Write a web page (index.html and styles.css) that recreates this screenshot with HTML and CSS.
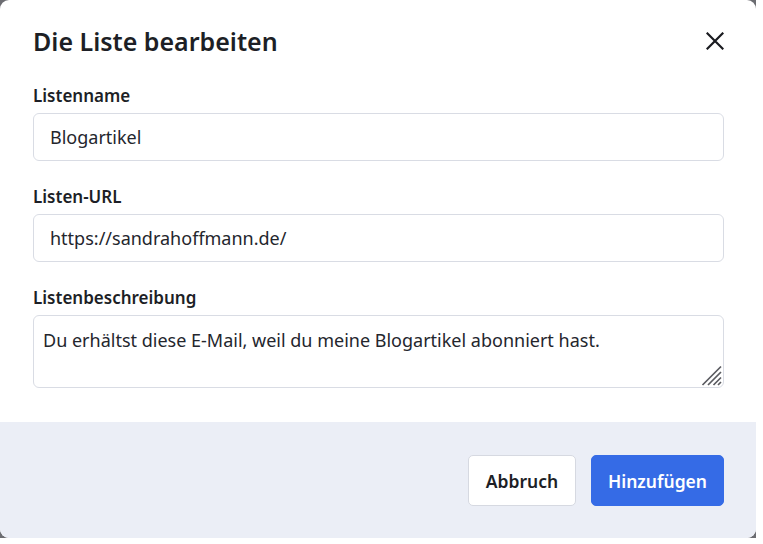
FILE: index.html
```html
<!DOCTYPE html>
<html lang="de">
<head>
<meta charset="utf-8">
<title>Die Liste bearbeiten</title>
<link rel="stylesheet" href="styles.css">
</head>
<body>
<div class="backdrop">
  <div class="dialog">
    <div class="content">
      <div class="header">
        <h1 class="title">Die Liste bearbeiten</h1>
        <button class="close" aria-label="Schließen">
          <svg width="18" height="18" viewBox="0 0 18 18"><path d="M1.5 1.5 L16.5 16.5 M16.5 1.5 L1.5 16.5" stroke="#1a1b20" stroke-width="2.2" stroke-linecap="square" fill="none"/></svg>
        </button>
      </div>
      <div class="fields">
        <div class="field">
          <label class="label">Listenname</label>
          <input class="input" type="text" value="Blogartikel">
        </div>
        <div class="field">
          <label class="label">Listen-URL</label>
          <input class="input" type="text" value="https://sandrahoffmann.de/">
        </div>
        <div class="field">
          <label class="label">Listenbeschreibung</label>
          <div class="textarea-wrap">
            <textarea class="textarea">Du erhältst diese E-Mail, weil du meine Blogartikel abonniert hast.</textarea>
            <svg class="grip" width="21" height="21" viewBox="0 0 21 21"><path d="M20 1.5 L1.5 20 M20 7 L7 20 M20 12.5 L12.5 20 M20 17 L17 20" stroke="#5a5b60" stroke-width="1.7" fill="none"/></svg>
          </div>
        </div>
      </div>
    </div>
    <div class="footer">
      <button class="btn btn-secondary">Abbruch</button>
      <button class="btn btn-primary">Hinzufügen</button>
    </div>
  </div>
</div>
</body>
</html>
```
FILE: styles.css
```css
* { box-sizing: border-box; }
html, body { margin: 0; padding: 0; background: #ffffff; }
body { font-family: "Noto Sans", "Inter", sans-serif; color: #1d1f26; }

.backdrop {
  width: 756px;
  height: 538px;
  background: #6c6d72;
}
.dialog {
  width: 756px;
  height: 538px;
  background: #ffffff;
  border-radius: 9px;
  overflow: hidden;
  display: flex;
  flex-direction: column;
}
.content {
  padding: 25px 32px 0 33px;
  height: 422px;
}
.header {
  display: flex;
  align-items: center;
  justify-content: space-between;
  height: 32px;
}
.title {
  margin: 0;
  font-size: 25px;
  line-height: 32px;
  font-weight: 600;
  color: #1d1f26;
}
.close {
  border: 0;
  background: transparent;
  padding: 0;
  width: 18px;
  height: 18px;
  display: flex;
}
.fields {
  margin-top: 27px;
  display: flex;
  flex-direction: column;
  gap: 24px;
}
.field {
  display: flex;
  flex-direction: column;
  gap: 5px;
}
.label {
  font-size: 17px;
  line-height: 24px;
  font-weight: 600;
  color: #1d1f26;
}
.input {
  height: 48px;
  width: 691px;
  border: 1px solid #d9dce4;
  border-radius: 6px;
  padding: 0 16px;
  font-family: inherit;
  font-size: 18px;
  color: #24262d;
  background: #fff;
  outline: none;
}
.textarea-wrap {
  position: relative;
  width: 691px;
  height: 73px;
}
.textarea {
  display: block;
  height: 73px;
  width: 691px;
  border: 1px solid #d9dce4;
  border-radius: 6px;
  padding: 11px 9px;
  font-family: inherit;
  font-size: 18px;
  line-height: 26px;
  color: #24262d;
  background: #fff;
  outline: none;
  resize: none;
}
.grip {
  position: absolute;
  right: 2px;
  bottom: 2px;
  pointer-events: none;
}
.footer {
  flex: 1;
  background: #ebeef6;
  display: flex;
  justify-content: flex-end;
  align-items: flex-start;
  gap: 15px;
  padding: 33px 32px 0 0;
}
.btn {
  height: 51px;
  border-radius: 5px;
  font-family: inherit;
  font-size: 17.5px;
  font-weight: 600;
  padding: 0 10px;
  cursor: pointer;
}
.btn-secondary {
  width: 108px;
  background: #ffffff;
  border: 1px solid #d6d9e1;
  color: #1d1f26;
}
.btn-primary {
  width: 133px;
  background: #356be6;
  border: 1px solid #356be6;
  color: #ffffff;
}
```
